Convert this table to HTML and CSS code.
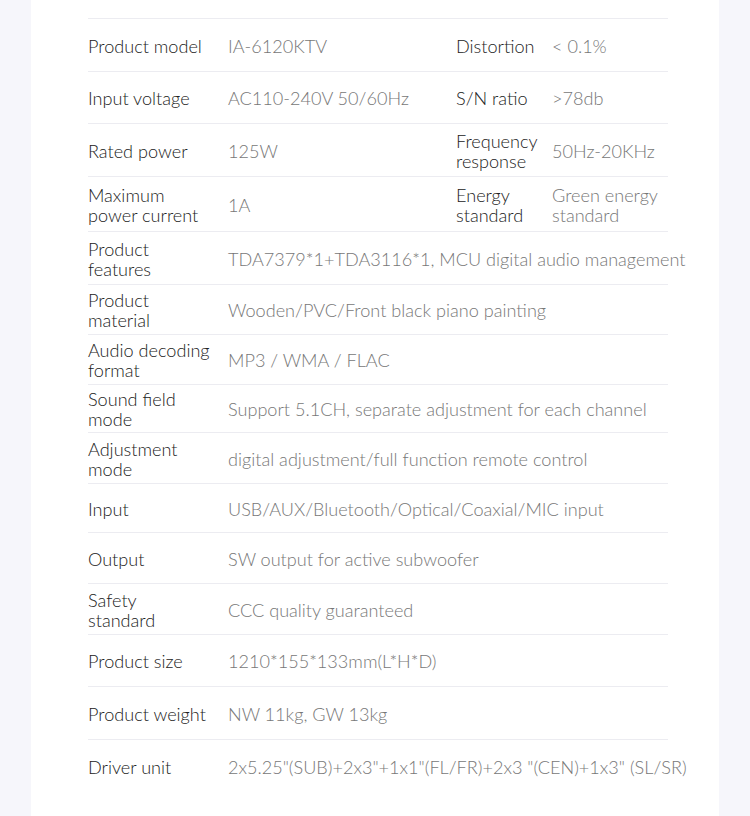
FILE: index.html
```html
<!DOCTYPE html>
<html lang="en">
<head>
<meta charset="utf-8">
<title>Specifications</title>
<link rel="stylesheet" href="styles.css">
</head>
<body>
<div class="card">
  <div class="spec">
    <div class="row">
      <div class="label">Product model</div><div class="value half">IA-6120KTV</div>
      <div class="label2">Distortion</div><div class="value2">&lt; 0.1%</div>
    </div>
    <div class="row h52">
      <div class="label">Input voltage</div><div class="value half">AC110-240V 50/60Hz</div>
      <div class="label2">S/N ratio</div><div class="value2">&gt;78db</div>
    </div>
    <div class="row">
      <div class="label">Rated power</div><div class="value half">125W</div>
      <div class="label2">Frequency response</div><div class="value2">50Hz-20KHz</div>
    </div>
    <div class="row h55">
      <div class="label">Maximum power current</div><div class="value half">1A</div>
      <div class="label2">Energy standard</div><div class="value2">Green energy standard</div>
    </div>
    <div class="row">
      <div class="label">Product<br>features</div><div class="value">TDA7379*1+TDA3116*1, MCU digital audio management</div>
    </div>
    <div class="row h50">
      <div class="label">Product<br>material</div><div class="value">Wooden/PVC/Front black piano painting</div>
    </div>
    <div class="row h50">
      <div class="label">Audio decoding format</div><div class="value">MP3 / WMA / FLAC</div>
    </div>
    <div class="row h48">
      <div class="label">Sound field mode</div><div class="value">Support 5.1CH, separate adjustment for each channel</div>
    </div>
    <div class="row h51">
      <div class="label">Adjustment mode</div><div class="value">digital adjustment/full function remote control</div>
    </div>
    <div class="row h49">
      <div class="label">Input</div><div class="value">USB/AUX/Bluetooth/Optical/Coaxial/MIC input</div>
    </div>
    <div class="row h51">
      <div class="label">Output</div><div class="value">SW output for active subwoofer</div>
    </div>
    <div class="row h51">
      <div class="label">Safety<br>standard</div><div class="value">CCC quality guaranteed</div>
    </div>
    <div class="row h52">
      <div class="label">Product size</div><div class="value">1210*155*133mm(L*H*D)</div>
    </div>
    <div class="row">
      <div class="label">Product weight</div><div class="value">NW 11kg, GW 13kg</div>
    </div>
    <div class="row last">
      <div class="label">Driver unit</div><div class="value">2x5.25"(SUB)+2x3"+1x1"(FL/FR)+2x3 "(CEN)+1x3" (SL/SR)</div>
    </div>
  </div>
</div>
</body>
</html>
```
FILE: styles.css
```css
html, body {
  margin: 0;
  padding: 0;
}
body {
  background: #f6f6fb;
  font-family: Lato, "Noto Sans", sans-serif;
  font-weight: 300;
  height: 816px;
  overflow: hidden;
}
.card {
  margin-left: 31px;
  width: 688px;
  height: 816px;
  background: #ffffff;
  padding: 18px 0 0 57px;
  box-sizing: border-box;
}
.spec {
  width: 580px;
  border-top: 1px solid #ececf1;
}
.row {
  display: flex;
  align-items: center;
  height: 53px;
  box-sizing: border-box;
  border-bottom: 1px solid #ececf1;
  padding-top: 1px;
  font-size: 18.1px;
  line-height: 20px;
}
.row.h55 { height: 55px; }
.row.h52 { height: 52px; }
.row.h51 { height: 51px; }
.row.h50 { height: 50px; }
.row.h49 { height: 49px; }
.row.h48 { height: 48px; }
.row.last { border-bottom: none; }
.label {
  width: 140px;
  flex: none;
  color: #222222;
  padding-right: 10px;
  box-sizing: border-box;
}
.value {
  color: #777777;
  white-space: nowrap;
}
.value.half {
  width: 228px;
  flex: none;
}
.label2 {
  width: 96px;
  flex: none;
  color: #222222;
}
.value2 {
  width: 116px;
  flex: none;
  color: #777777;
}
```
